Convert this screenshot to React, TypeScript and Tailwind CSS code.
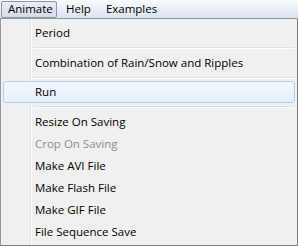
import React from 'react';

const Sep = ({ h }: { h: string }) => (
  <div className={h + ' flex flex-col justify-center pl-[32px] pr-[2px]'}>
    <div className="h-px bg-[#e0e0e0]" />
    <div className="h-px bg-white" />
  </div>
);

const Item = ({ label, disabled, active }: { label: string; disabled?: boolean; active?: boolean }) => (
  <div
    className={
      'h-[22px] flex items-center ' +
      (disabled ? 'text-[#8d8d8d] ' : 'text-black ') +
      (active
        ? 'mx-[2px] pl-[31px] rounded-[3px] border border-[#a9d1f5] bg-gradient-to-b from-[#f3f8fd] to-[#e6f0fb]'
        : 'pl-[34px]')
    }
  >
    {label}
  </div>
);

export default function App() {
  return (
    <div className="w-[298px] h-[246px] bg-white flex flex-col text-[11.5px] font-['Segoe_UI','Open_Sans',sans-serif]">
      {/* menu bar */}
      <div className="h-[18px] flex items-center bg-gradient-to-b from-[#f9fbfe] to-[#dbe4f1]">
        <div className="ml-px w-[56px] h-[17px] pl-[6px] flex items-center rounded-[2px] border border-[#8b96a6] bg-gradient-to-b from-[#e9edf3] to-[#d5dce7]">
          Animate
        </div>
        <div className="ml-[9px]">Help</div>
        <div className="ml-[15px]">Examples</div>
      </div>
      {/* dropdown */}
      <div className="flex-1 relative border border-[#979797] border-r-[#7a7a7a] border-b-[#7a7a7a] bg-[#f0f0f0] pt-[3px]">
        <div className="absolute top-0 bottom-0 left-[29px] w-[2px] flex">
          <div className="w-px bg-[#e2e3e3]" />
          <div className="w-px bg-white" />
        </div>
        <div className="relative flex flex-col">
          <Item label="Period" />
          <Sep h="h-[8px]" />
          <Item label="Combination of Rain/Snow and Ripples" />
          <Sep h="h-[7px]" />
          <Item label="Run" active />
          <Sep h="h-[8px]" />
          <Item label="Resize On Saving" />
          <Item label="Crop On Saving" disabled />
          <Item label="Make AVI File" />
          <Item label="Make Flash File" />
          <Item label="Make GIF File" />
          <Item label="File Sequence Save" />
        </div>
      </div>
    </div>
  );
}
